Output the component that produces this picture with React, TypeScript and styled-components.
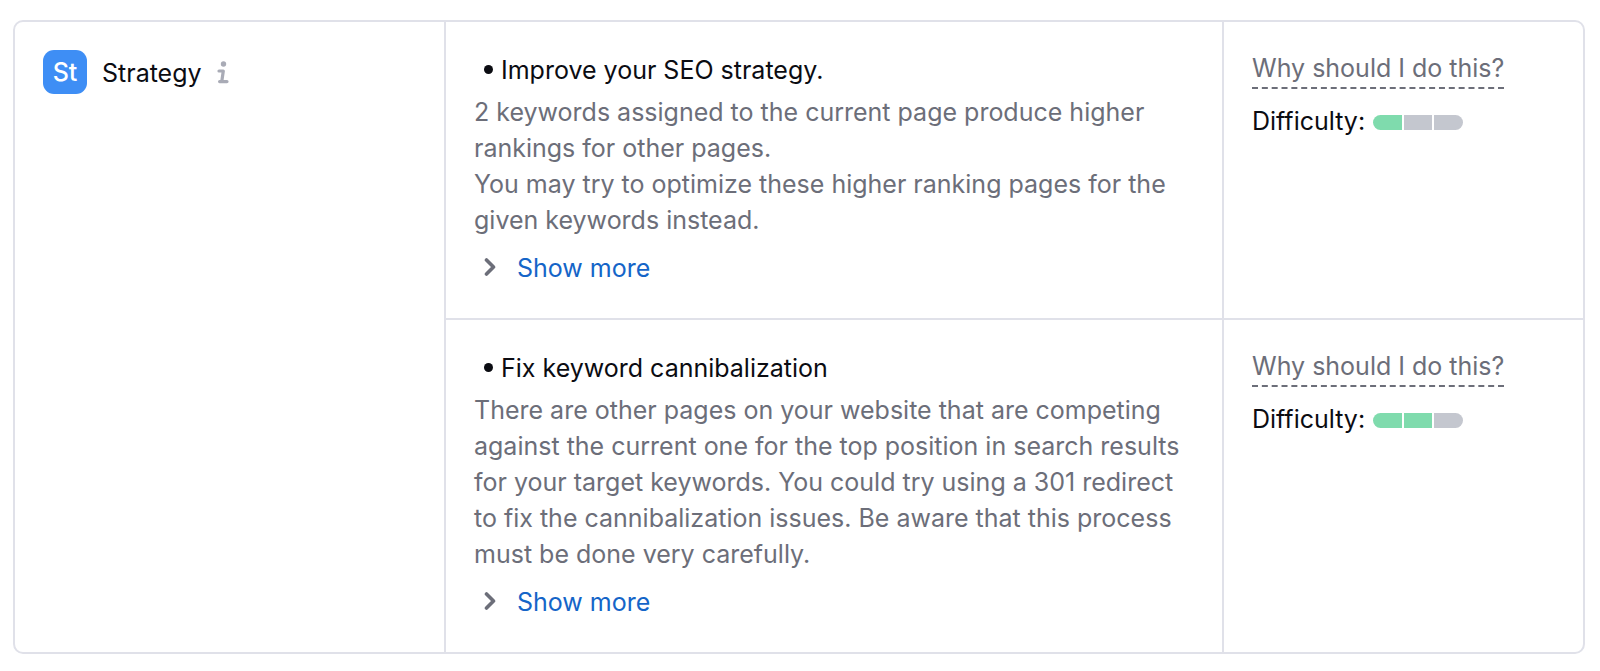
import React from 'react';
import styled, { createGlobalStyle } from 'styled-components';

const colors = {
  text: '#0b0c12',
  muted: '#6c6e79',
  border: '#e0e1e9',
  link: '#1565c8',
  badge: '#3e8ef5',
  icon: '#a9abb6',
  on: '#7fdbad',
  off: '#c4c7cf',
};

const GlobalStyle = createGlobalStyle`
  * { box-sizing: border-box; }
  body {
    margin: 0;
    background: #fff;
    color: ${colors.text};
    font: 400 25px/36px Inter, "Liberation Sans", sans-serif;
  }
  button { font: inherit; }
`;

const Page = styled.main`
  padding: 20px 15px 20px 13px;
`;

const Table = styled.table`
  width: 100%;
  table-layout: fixed;
  border: 2px solid ${colors.border};
  border-radius: 10px;
  border-spacing: 0;
  text-align: left;
`;

const Column = styled.col<{ $width?: number }>`
  width: ${(p) => (p.$width ? `${p.$width}px` : 'auto')};
`;

const Cell = styled.td<{ $divided?: boolean }>`
  padding: 30px 28px 32px;
  vertical-align: top;
  border-left: 2px solid ${colors.border};
  border-top: ${(p) => (p.$divided ? `2px solid ${colors.border}` : '0')};
`;

const EffortCell = styled(Cell)`
  padding-top: 28px;
`;

const CategoryCell = styled.th`
  padding: 28px;
  vertical-align: top;
  font-weight: 400;
`;

const Category = styled.div`
  display: flex;
  align-items: center;
  gap: 15px;
`;

const CategoryName = styled.span`
  padding-top: 2px;
`;

const Badge = styled.span`
  display: flex;
  align-items: center;
  justify-content: center;
  width: 44px;
  height: 44px;
  border-radius: 11px;
  background: ${colors.badge};
  color: #fff;
  font-weight: 500;
`;

const InfoButton = styled.button`
  display: flex;
  padding: 0;
  border: 0;
  background: none;
  color: ${colors.icon};
`;

const IdeaTitle = styled.h3`
  display: flex;
  align-items: center;
  gap: 8px;
  margin: 0 0 6px;
  padding-left: 10px;
  font-size: 25px;
  font-weight: 400;
`;

const Bullet = styled.span`
  width: 9px;
  height: 9px;
  margin-bottom: 2px;
  border-radius: 50%;
  background: ${colors.text};
`;

const Description = styled.p`
  margin: 0;
  color: ${colors.muted};
`;

const ShowMore = styled.button`
  display: flex;
  align-items: center;
  gap: 20px;
  margin-top: 12px;
  padding: 0 0 0 10px;
  border: 0;
  background: none;
  color: ${colors.link};
  cursor: pointer;

  svg { color: ${colors.muted}; }
`;

const WhyButton = styled.button`
  display: block;
  padding: 0 0 1px;
  border: 0;
  border-bottom: 2px dashed ${colors.muted};
  background: none;
  color: ${colors.muted};
  cursor: pointer;
`;

const Difficulty = styled.div`
  display: flex;
  align-items: center;
  gap: 8px;
  margin-top: 14px;
`;

const Meter = styled.span`
  display: flex;
  gap: 2px;
  width: 90px;
  height: 15px;
  margin-top: 2px;
  border-radius: 8px;
  overflow: hidden;
`;

const Segment = styled.span<{ $on: boolean }>`
  flex: 1;
  background: ${(p) => (p.$on ? colors.on : colors.off)};
`;

const InfoIcon = () => (
  <svg width="12" height="23" viewBox="0 0 12 23" fill="none" aria-hidden="true">
    <circle cx="6.5" cy="3" r="2.7" fill="currentColor" />
    <path
      d="M2 10H6.3L4.8 20.3M2.6 20.6H10"
      stroke="currentColor"
      strokeWidth="3.2"
      strokeLinecap="round"
      strokeLinejoin="round"
    />
  </svg>
);

const ChevronIcon = () => (
  <svg width="13" height="22" viewBox="0 0 13 22" fill="none" aria-hidden="true">
    <path d="M2.5 3L9.5 10L2.5 17" stroke="currentColor" strokeWidth="3.6" strokeLinecap="round" strokeLinejoin="round" />
  </svg>
);

interface Idea {
  title: string;
  paragraphs: string[];
  difficulty: number;
}

const ideas: Idea[] = [
  {
    title: 'Improve your SEO strategy.',
    paragraphs: [
      '2 keywords assigned to the current page produce higher rankings for other pages.',
      'You may try to optimize these higher ranking pages for the given keywords instead.',
    ],
    difficulty: 1,
  },
  {
    title: 'Fix keyword cannibalization',
    paragraphs: [
      'There are other pages on your website that are competing against the current one for the top position in search results for your target keywords. You could try using a 301 redirect to fix the cannibalization issues. Be aware that this process must be done very carefully.',
    ],
    difficulty: 2,
  },
];

export default function App() {
  return (
    <Page>
      <GlobalStyle />
      <Table>
        <colgroup>
          <Column $width={429} />
          <Column />
          <Column $width={361} />
        </colgroup>
        <tbody>
          {ideas.map((idea, index) => (
            <tr key={idea.title}>
              {index === 0 && (
                <CategoryCell scope="rowgroup" rowSpan={ideas.length}>
                  <Category>
                    <Badge aria-hidden="true">St</Badge>
                    <CategoryName>Strategy</CategoryName>
                    <InfoButton type="button" aria-label="About strategy ideas">
                      <InfoIcon />
                    </InfoButton>
                  </Category>
                </CategoryCell>
              )}
              <Cell $divided={index > 0}>
                <IdeaTitle>
                  <Bullet />
                  {idea.title}
                </IdeaTitle>
                {idea.paragraphs.map((text) => (
                  <Description key={text}>{text}</Description>
                ))}
                <ShowMore type="button">
                  <ChevronIcon />
                  Show more
                </ShowMore>
              </Cell>
              <EffortCell $divided={index > 0}>
                <WhyButton type="button">Why should I do this?</WhyButton>
                <Difficulty>
                  <span>Difficulty:</span>
                  <Meter role="img" aria-label={`${idea.difficulty} out of 3`}>
                    {[1, 2, 3].map((level) => (
                      <Segment key={level} $on={level <= idea.difficulty} />
                    ))}
                  </Meter>
                </Difficulty>
              </EffortCell>
            </tr>
          ))}
        </tbody>
      </Table>
    </Page>
  );
}
